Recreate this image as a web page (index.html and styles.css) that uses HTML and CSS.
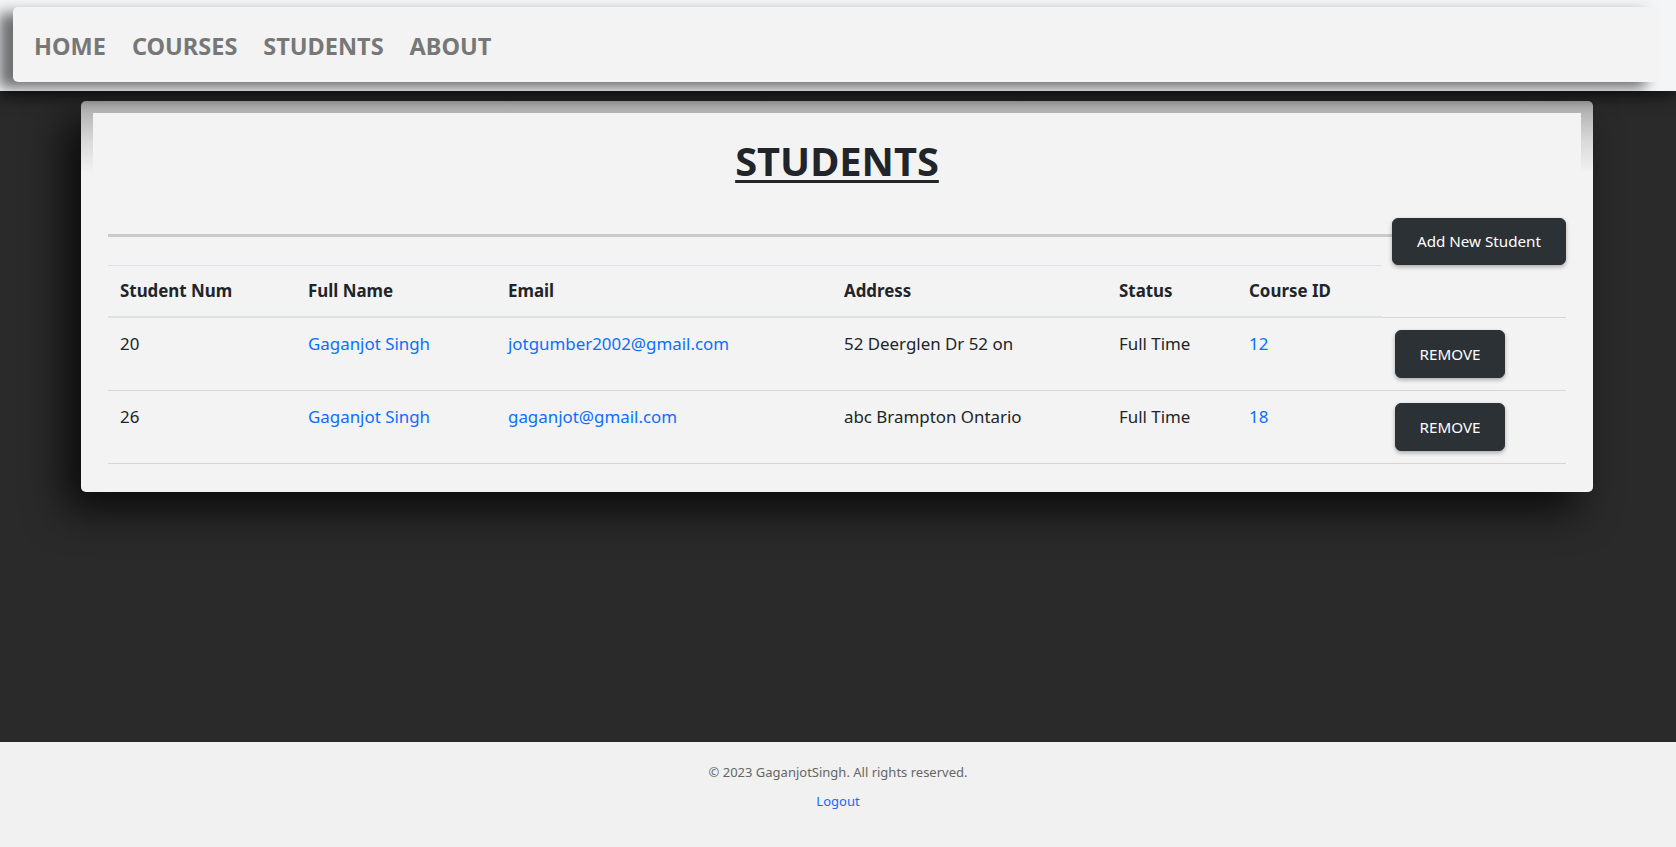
FILE: index.html
```html
<!DOCTYPE html>
<html lang="en">
<head>
<meta charset="utf-8">
<title>Students</title>
<link rel="stylesheet" href="styles.css">
</head>
<body>
<header class="site-header">
  <nav class="navbar">
    <a class="nav-link" href="#">HOME</a>
    <a class="nav-link" href="#">COURSES</a>
    <a class="nav-link" href="#">STUDENTS</a>
    <a class="nav-link" href="#">ABOUT</a>
  </nav>
</header>
<main class="main">
  <section class="card">
    <div class="card-head">
      <h1 class="title">STUDENTS</h1>
    </div>
    <div class="card-body">
      <div class="toolbar">
        <hr class="rule">
        <button class="btn btn-add" type="button">Add New Student</button>
      </div>
      <table class="table">
        <thead>
          <tr>
            <th class="c1">Student Num</th>
            <th class="c2">Full Name</th>
            <th class="c3">Email</th>
            <th class="c4">Address</th>
            <th class="c5">Status</th>
            <th class="c6">Course ID</th>
          </tr>
        </thead>
        <tbody>
          <tr>
            <td>20</td>
            <td><a class="link" href="#">Gaganjot Singh</a></td>
            <td><a class="link" href="#">jotgumber2002@gmail.com</a></td>
            <td>52 Deerglen Dr 52 on</td>
            <td>Full Time</td>
            <td><a class="link" href="#">12</a></td>
            <td class="c7"><button class="btn btn-remove" type="button">REMOVE</button></td>
          </tr>
          <tr>
            <td>26</td>
            <td><a class="link" href="#">Gaganjot Singh</a></td>
            <td><a class="link" href="#">gaganjot@gmail.com</a></td>
            <td>abc Brampton Ontario</td>
            <td>Full Time</td>
            <td><a class="link" href="#">18</a></td>
            <td class="c7"><button class="btn btn-remove" type="button">REMOVE</button></td>
          </tr>
        </tbody>
      </table>
    </div>
  </section>
</main>
<footer class="footer">
  <p class="copy">© 2023 GaganjotSingh. All rights reserved.</p>
  <a class="logout" href="#">Logout</a>
</footer>
</body>
</html>
```
FILE: styles.css
```css
* { box-sizing: border-box; }

html, body { height: 100%; }

body {
  margin: 0;
  min-height: 100vh;
  display: flex;
  flex-direction: column;
  font-family: "Noto Sans", "Open Sans", sans-serif;
  font-size: 16.9px;
  line-height: 26.4px;
  color: #212529;
  background: #2a2a2a;
}

/* ---------- header / nav ---------- */
.site-header {
  position: relative;
  z-index: 2;
  height: 91px;
  padding: 7px 16px 0 13px;
  background: #f4f5f7;
  box-shadow: 0 6px 14px rgba(0, 0, 0, 0.55);
}

.navbar {
  height: 75px;
  display: flex;
  align-items: center;
  gap: 26px;
  padding: 3px 0 0 21px;
  background: #f3f3f3;
  border-radius: 5px;
  box-shadow: -14px 6px 14px rgba(0, 0, 0, 0.55);
}

.nav-link {
  font-size: 23.5px;
  font-weight: 700;
  color: #777777;
  text-decoration: none;
}

/* ---------- main ---------- */
.main {
  flex: 1;
  padding: 10px 0 0;
  background: #2a2a2a;
}

.card {
  width: 1512px;
  margin: 0 auto 0 81px;
  padding: 12px 12px 28px;
  border-radius: 5px;
  background: linear-gradient(to bottom, #a8a8a8 0, #d9d9d9 40px, #f3f3f3 72px);
  box-shadow: -16px 18px 40px rgba(0, 0, 0, 0.75);
  position: relative;
  z-index: 1;
}

.card-head {
  background: #f3f3f3;
  padding: 25px 0 33px 0;
  text-align: center;
}

.title {
  margin: 0;
  font-size: 39.8px;
  line-height: 46.8px;
  font-weight: 700;
  color: #212529;
  text-decoration: underline;
  text-decoration-thickness: 3px;
  text-underline-offset: 4px;
}

.card-body {
  background: #f3f3f3;
  margin: 0 -12px;
  padding: 0 27px;
}

.toolbar {
  display: flex;
  align-items: flex-start;
  height: 47px;
}

.rule {
  flex: 1;
  margin: 16px 0 0;
  height: 3px;
  border: 0;
  background: #cacaca;
}

.btn {
  font-family: "Noto Sans", "Open Sans", sans-serif;
  font-size: 15.2px;
  color: #ffffff;
  background: #2c3136;
  border: 1px solid #2c3136;
  border-radius: 6px;
  box-shadow: 0 2px 4px rgba(0, 0, 0, 0.3);
  cursor: pointer;
}

.btn-add {
  height: 47px;
  padding: 0 24px;
  line-height: 45px;
}

.btn-remove {
  height: 48px;
  width: 110px;
  padding: 0;
  line-height: 46px;
}

/* ---------- table ---------- */
.table {
  width: 100%;
  border-collapse: collapse;
  table-layout: fixed;
}

.table th,
.table td {
  padding: 12px;
  text-align: left;
  vertical-align: top;
}

.table th {
  font-weight: 700;
  border-top: 1px solid #dee2e6;
  border-bottom: 2px solid #dee2e6;
}

.table td {
  padding-top: 13px;
  border-top: 1px solid #d6d6d6;
  border-bottom: 1px solid #d6d6d6;
}

.c1 { width: 188px; }
.c2 { width: 200px; }
.c3 { width: 336px; }
.c4 { width: 275px; }
.c5 { width: 130px; }
.c6 { width: 145px; }
.table td.c7 { padding: 12px 12px 12px 13px; }

.link {
  color: #0d6efd;
  text-decoration: none;
}

/* ---------- footer ---------- */
.footer {
  height: 105px;
  padding-top: 20px;
  background: #f1f1f1;
  text-align: center;
  font-size: 13px;
  line-height: 20px;
}

.copy {
  margin: 0 0 9px;
  color: #666666;
}

.logout {
  color: #0d6efd;
  text-decoration: none;
}
```
